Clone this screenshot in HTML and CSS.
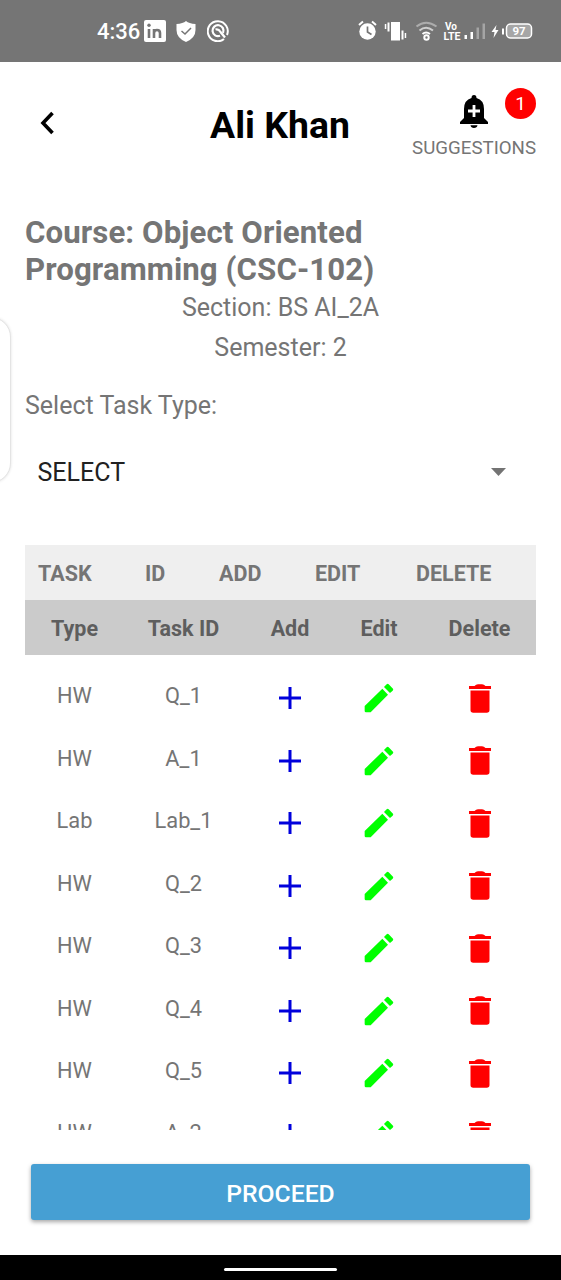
FILE: index.html
```
<!DOCTYPE html>
<html lang="en">
<head>
<meta charset="utf-8">
<title>Ali Khan</title>
<link rel="stylesheet" href="styles.css">
</head>
<body>
<svg class="defs" width="0" height="0">
  <symbol id="plus" viewBox="0 0 22 22"><path d="M9.500 0h3v9.500H22v3h-9.500V22h-3v-9.500H0v-3h9.500z"/></symbol>
  <symbol id="pencil" viewBox="0 0 90 90"><path d="M2 69L55 17 72 35 20 88H6Q2 88 2 84ZM60 12L68 4Q71 1 74 4L87 17Q89 20 86 23L78 30Z"/></symbol>
  <symbol id="trash" viewBox="0 0 22 29"><path d="M0 2h5.500Q7 .3 9 .3h4Q15 .3 16.500 2H22v3H0zM1.500 6.500h19V26q0 2.700-2.700 2.700H4.200Q1.500 28.700 1.500 26z"/></symbol>
</svg>
<div class="screen">
  <header class="status">
    <span class="clock">4:36</span>
    <svg class="linkedin" width="22" height="22" viewBox="0 0 22 22"><rect width="22" height="22" rx="2" fill="#fff"/><path d="M5 9v9M10 9v9M10 13q0-3 3-3t3 3v5" fill="none" stroke="#757575" stroke-width="2.600"/><circle cx="5" cy="5.200" r="1.700" fill="#757575"/></svg>
    <svg class="shield" width="20" height="21" viewBox="0 0 20 21"><path d="M10 0Q13 2.500 19.500 3V9Q19.500 17 10 21 .5 17 .5 9V3Q7 2.500 10 0Z" fill="#fff"/><path d="M5.500 10l3.500 3 6-6" fill="none" stroke="#757575" stroke-width="1.500"/></svg>
    <svg class="disc" width="22" height="22" viewBox="0 0 22 22" fill="none" stroke="#fff"><path d="M17 19A10 10 0 1 1 20 15" stroke-width="2"/><path d="M13 15.800A5.500 5.500 0 1 1 16 13" stroke-width="2.200"/><path d="M8.500 9.500q3-1 5 2.500l4.500 5.500" stroke-width="2.200"/></svg>
    <span class="spacer"></span>
    <svg width="194" height="24" viewBox="0 0 194 24" fill="#fff">
      <circle cx="17.500" cy="12.500" r="8.200"/><path d="M9 6l4-3.500M26 6l-4-3.500" stroke="#fff" stroke-width="2"/><path d="M17.500 7.500V13l4 2.500" fill="none" stroke="#757575" stroke-width="1.700"/>
      <path d="M41 3h9v18.500h-9zM37.500 3.500h2v9h-2zM34.800 5h1.500v5h-1.500zM51.500 11.500h2v9h-2zM54.700 14h1.500v5h-1.500z"/>
      <g fill="none" stroke="#fff" stroke-width="2"><path d="M66.500 7.500Q76 0 86.500 7.500" opacity=".4"/><path d="M69.500 11.500Q76 6 83 11.500" opacity=".65"/><path d="M72.500 15Q76 12 80 15"/><circle cx="76.500" cy="18.500" r="2.200"/></g>
      <g font-family="Roboto" font-weight="700" font-size="10"><text x="95" y="10.500">Vo</text><text x="93.500" y="20.500" textLength="17" lengthAdjust="spacingAndGlyphs">LTE</text></g>
      <path d="M114.500 16h2.500v4h-2.500zM120.500 13h2.500v7h-2.500z"/><path d="M126.500 8.500h2.500V20h-2.500zM132.500 4.500h2.500V20h-2.500z" opacity=".35"/>
      <path d="M146.500 6l-5 7h3l-1 6 5-8h-3zM152 9.500h2v6h-2z"/>
      <rect x="156.500" y="5" width="25" height="14" rx="4" fill="#a6a6a6" stroke="#fff" stroke-width="1.500"/>
      <text x="169" y="16" text-anchor="middle" font-family="Roboto" font-weight="700" font-size="11.500">97</text>
    </svg>
  </header>
  <section class="top">
    <svg class="back" width="14" height="24" viewBox="0 0 14 24"><path d="M12.500 2L3 12l9.500 10" fill="none" stroke="#000" stroke-width="3.600"/></svg>
    <h1>Ali Khan</h1>
    <div class="suggest">
      <div class="alerts">
        <svg width="28" height="33" viewBox="0 0 28 33"><path d="M14 0q2.500 0 2.500 3Q24 5 24 14v9l4 4v2H0v-2l4-4v-9Q4 5 11.500 3 11.500 0 14 0ZM10.500 30.300h7q-.5 2.700-3.500 2.700t-3.500-2.700Z"/><path d="M8 16h12M14 10v12" stroke="#fff" stroke-width="2.800"/></svg>
        <span class="count">1</span>
      </div>
      <span class="label">SUGGESTIONS</span>
    </div>
  </section>
  <main>
    <h2>Course: Object Oriented<br>Programming (CSC-102)</h2>
    <p class="section">Section: BS AI_2A</p>
    <p class="semester">Semester: 2</p>
    <p class="prompt">Select Task Type:</p>
    <div class="select"><span>SELECT</span><svg width="15" height="8" viewBox="0 0 15 8"><path d="M0 0h15L7.500 8z" fill="#737373"/></svg></div>
    <div class="tabs"><span>TASK</span><span>ID</span><span>ADD</span><span>EDIT</span><span>DELETE</span></div>
    <div class="row head"><span>Type</span><span>Task ID</span><span>Add</span><span>Edit</span><span>Delete</span></div>
    <div class="list">
      <div class="row"><span>HW</span><span>Q_1</span><svg class="plus"><use href="#plus"/></svg><svg class="pencil"><use href="#pencil"/></svg><svg class="trash"><use href="#trash"/></svg></div>
      <div class="row"><span>HW</span><span>A_1</span><svg class="plus"><use href="#plus"/></svg><svg class="pencil"><use href="#pencil"/></svg><svg class="trash"><use href="#trash"/></svg></div>
      <div class="row"><span>Lab</span><span>Lab_1</span><svg class="plus"><use href="#plus"/></svg><svg class="pencil"><use href="#pencil"/></svg><svg class="trash"><use href="#trash"/></svg></div>
      <div class="row"><span>HW</span><span>Q_2</span><svg class="plus"><use href="#plus"/></svg><svg class="pencil"><use href="#pencil"/></svg><svg class="trash"><use href="#trash"/></svg></div>
      <div class="row"><span>HW</span><span>Q_3</span><svg class="plus"><use href="#plus"/></svg><svg class="pencil"><use href="#pencil"/></svg><svg class="trash"><use href="#trash"/></svg></div>
      <div class="row"><span>HW</span><span>Q_4</span><svg class="plus"><use href="#plus"/></svg><svg class="pencil"><use href="#pencil"/></svg><svg class="trash"><use href="#trash"/></svg></div>
      <div class="row"><span>HW</span><span>Q_5</span><svg class="plus"><use href="#plus"/></svg><svg class="pencil"><use href="#pencil"/></svg><svg class="trash"><use href="#trash"/></svg></div>
      <div class="row"><span>HW</span><span>A_2</span><svg class="plus"><use href="#plus"/></svg><svg class="pencil"><use href="#pencil"/></svg><svg class="trash"><use href="#trash"/></svg></div>
    </div>
    <button class="proceed">PROCEED</button>
  </main>
  <footer><span></span></footer>
  <div class="edge"></div>
</div>
</body>
</html>
```
FILE: styles.css
```
* { box-sizing: border-box; }
body { margin: 0; font-family: Roboto, sans-serif; color: #757575; background: #fff; }
h1, h2, p { margin: 0; }
.defs { position: absolute; }
.screen { position: relative; width: 561px; height: 1280px; overflow: hidden; display: flex; flex-direction: column; }
.status { height: 62px; flex: none; background: #757575; display: flex; align-items: center; padding: 0 17px 0 97px; color: #fff; }
.clock { font-size: 22px; font-weight: 500; width: 47px; line-height: 24px; padding-top: 2px; }
.shield { margin-left: 10px; }
.disc { margin-left: 11px; }
.spacer { flex: 1; }
.top { height: 153px; flex: none; display: grid; grid-template-columns: 150px 1fr 150px; padding-top: 32px; }
.back { margin: 17px 0 0 40px; }
h1 { font-size: 37.400px; line-height: 44px; font-weight: 700; color: #000; text-align: center; padding-top: 9px; padding-right: 1px; white-space: nowrap; }
.suggest { display: flex; flex-direction: column; align-items: flex-end; padding-right: 25px; }
.alerts { display: flex; gap: 17px; height: 42px; color: #000; }
.alerts > svg { margin-top: 1px; }
.count { width: 31px; height: 31px; margin-top: -6px; border-radius: 50%; background: #f00; color: #fff; font-size: 19px; line-height: 32px; text-align: center; }
.label { font-size: 18.700px; line-height: 25px; white-space: nowrap; }
main { flex: 1; min-height: 0; padding: 0 25px; display: flex; flex-direction: column; }
h2 { font-size: 31.200px; line-height: 36.600px; font-weight: 700; letter-spacing: .1px; white-space: nowrap; }
.section, .semester { font-size: 25px; line-height: 30px; text-align: center; margin-top: 5px; }
.semester { margin-top: 10px; }
.prompt { font-size: 25px; line-height: 30px; margin-top: 28px; }
.select { display: flex; align-items: center; justify-content: space-between; height: 40px; margin-top: 31px; padding: 0 30px 0 12.500px; font-size: 25px; color: #212121; }
.tabs { display: grid; grid-template-columns: 107px 74px 96px 101px 1fr; align-items: center; height: 55px; margin-top: 53px; flex: none; padding: 2px 0 0 13px; background: #efefef; font-size: 21.500px; font-weight: 700; }
.row { display: grid; grid-template-columns: 99px 119px 94px 84px 117px; justify-items: center; align-items: center; height: 62.450px; font-size: 21.800px; }
.row > span { padding-bottom: 5px; }
.head { height: 55px; flex: none; background: #cbcbcb; color: #5e5e5e; font-size: 21.500px; font-weight: 700; }
.head > span { padding: 2px 0 0; }
.list { height: 475px; flex: none; overflow: hidden; padding-top: 12px; }
.plus { width: 22px; height: 22px; fill: #0000dc; }
.pencil { width: 30px; height: 30px; fill: #0f0; }
.trash { width: 22px; height: 29px; fill: #f00; }
.proceed { height: 56px; flex: none; margin: 34px 6px 0; border: 0; border-radius: 3px; background: #469fd3; color: #fff; font: 500 24.700px Roboto, sans-serif; box-shadow: 0 2px 4px rgba(0,0,0,.35); padding: 2px 0 0; }
footer { height: 25px; flex: none; background: #000; display: flex; justify-content: center; align-items: center; padding-top: 3px; }
footer span { width: 113px; height: 3px; border-radius: 2px; background: #fff; }
.edge { position: absolute; left: -30px; top: 317px; width: 41px; height: 166px; border: 1px solid #e4e4e4; border-radius: 20px; background: #fff; box-shadow: 0 0 3px rgba(0,0,0,.12); }
```
